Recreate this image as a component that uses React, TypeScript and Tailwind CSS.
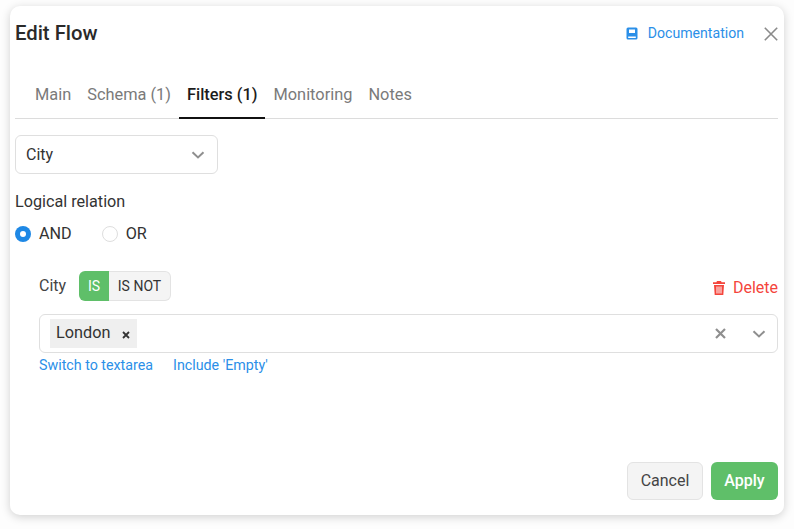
const tabs = ["Main", "Schema (1)", "Filters (1)", "Monitoring", "Notes"];

function Chevron({ className }: { className: string }) {
  return (
    <svg className={className} width="14" height="8" viewBox="0 0 14 8" fill="none" stroke="#8f8f8f" strokeWidth="2">
      <path d="M1.5 1.2 7 6.4l5.5-5.2" />
    </svg>
  );
}

export default function App() {
  return (
    <div className="w-[794px] h-[529px] overflow-hidden bg-[#fdfdfd] pl-[10px] pt-[6px] font-['Roboto',sans-serif]">
      <div className="w-[774px] h-[509px] bg-white rounded-[10px] shadow-[0_2px_10px_rgba(0,0,0,0.18)] pl-[5px] pr-[6px] flex flex-col">
        {/* Header */}
        <div className="h-[56px] pt-[14px] flex items-start justify-between">
          <h1 className="text-[20.3px] leading-[26px] font-medium text-[#2a2a2a]">Edit Flow</h1>
          <div className="flex items-center pt-[3px]">
            <svg width="12" height="13" viewBox="0 0 12 13" className="text-[#2b8fe8]">
              <path fill="currentColor" d="M2 .5h8A1.5 1.5 0 0 1 11.5 2v9A1.5 1.5 0 0 1 10 12.5H2A1.5 1.5 0 0 1 .5 11V2A1.5 1.5 0 0 1 2 .5Z" />
              <path fill="#fff" d="M3 2.5h6v3.5H3zM2.2 9.5h7.6v1.4H2.2z" />
            </svg>
            <a className="ml-[10px] text-[14.1px] leading-[20px] text-[#2b8fe8]">Documentation</a>
            <svg width="14" height="14" viewBox="0 0 14 14" className="ml-[20px] mt-[2px]" stroke="#8a8a8a" strokeWidth="1.6" fill="none">
              <path d="M.8.8l12.4 12.4M13.2.8.8 13.2" />
            </svg>
          </div>
        </div>

        {/* Tabs */}
        <div className="flex h-[57px] border-b border-[#dcdcdc] pl-[12px]">
          {tabs.map((tab) => {
            const active = tab === "Filters (1)";
            return (
              <div
                key={tab}
                className={`px-[8px] pt-[21px] text-[16.37px] leading-[24px] border-b-2 -mb-px ${
                  active ? "font-medium text-[#1c1c1c] border-[#111111]" : "text-[#7a7a7a] border-transparent"
                }`}
              >
                {tab}
              </div>
            );
          })}
        </div>

        {/* Field select */}
        <div className="mt-[16px] w-[203px] h-[39px] border border-[#dfdfdf] rounded-[6px] flex items-center justify-between pl-[10px] pr-[12px] text-[16px] text-[#333333]">
          <span>City</span>
          <Chevron className="" />
        </div>

        {/* Logical relation */}
        <div className="mt-[17px] text-[16.2px] leading-[22px] text-[#333333]">Logical relation</div>
        <div className="mt-[10px] flex items-center text-[16.2px] leading-[22px] text-[#333333]">
          <span className="w-[16px] h-[16px] rounded-full bg-[#1e88e5] flex items-center justify-center">
            <span className="w-[6px] h-[6px] rounded-full bg-white" />
          </span>
          <span className="ml-[8px]">AND</span>
          <span className="ml-[30px] w-[16px] h-[16px] rounded-full border border-[#dedede] bg-white" />
          <span className="ml-[8px]">OR</span>
        </div>

        {/* Filter rule */}
        <div className="mt-[26px] ml-[24px]">
          <div className="flex items-center justify-between h-[30px]">
            <div className="flex items-center">
              <span className="w-[28px] text-[16px] text-[#444444]">City</span>
              <div className="ml-[12px] flex h-[30px] text-[14px]">
                <span className="w-[30px] rounded-l-[6px] bg-[#5fbf69] text-white flex items-center justify-center">IS</span>
                <span className="w-[62px] rounded-r-[6px] border border-l-0 border-[#e3e3e3] bg-[#f4f4f4] text-[#333333] flex items-center justify-center">IS NOT</span>
              </div>
            </div>
            <div className="flex items-center text-[#f4453c] text-[16px] pt-[4px]">
              <svg width="12" height="14" viewBox="0 0 12 14" fill="currentColor">
                <path d="M4 0h4l.6 1.3H12v1.6H0V1.3h3.4zM1 4h10l-.7 10H1.700zM3.500 5.500v7h1v-7zm2 0v7h1v-7zm2 0v7h1v-7z" fillRule="evenodd" />
              </svg>
              <span className="ml-[8px]">Delete</span>
            </div>
          </div>

          <div className="mt-[13px] h-[39px] border border-[#dfdfdf] rounded-[6px] flex items-center pl-[10px] pr-[11px]">
            <div className="h-[29px] w-[87px] bg-[#efefef] flex items-center pl-[6px] text-[16.3px] text-[#333333]">
              <span>London</span>
              <svg width="8" height="8" viewBox="0 0 8 8" className="ml-[11px] mt-[2px]" stroke="#333333" strokeWidth="1.800" fill="none">
                <path d="M1 1l6 6M7 1 1 7" />
              </svg>
            </div>
            <svg width="11" height="11" viewBox="0 0 11 11" className="ml-auto" stroke="#8f8f8f" strokeWidth="2.200" fill="none">
              <path d="M1 1l9 9M10 1l-9 9" />
            </svg>
            <Chevron className="ml-[26px]" />
          </div>

          <div className="mt-[3px] flex text-[14.25px] leading-[18px] text-[#2b8fe8]">
            <a>Switch to textarea</a>
            <a className="ml-[20px]">Include 'Empty'</a>
          </div>
        </div>

        {/* Footer */}
        <div className="mt-auto mb-[15px] flex justify-end gap-[8px] text-[16px]">
          <button className="w-[76px] h-[38px] rounded-[6px] border border-[#e3e3e3] bg-[#f4f4f4] text-[#444444]">Cancel</button>
          <button className="w-[67px] h-[38px] rounded-[6px] bg-[#5fbf69] text-white font-medium">Apply</button>
        </div>
      </div>
    </div>
  );
}
